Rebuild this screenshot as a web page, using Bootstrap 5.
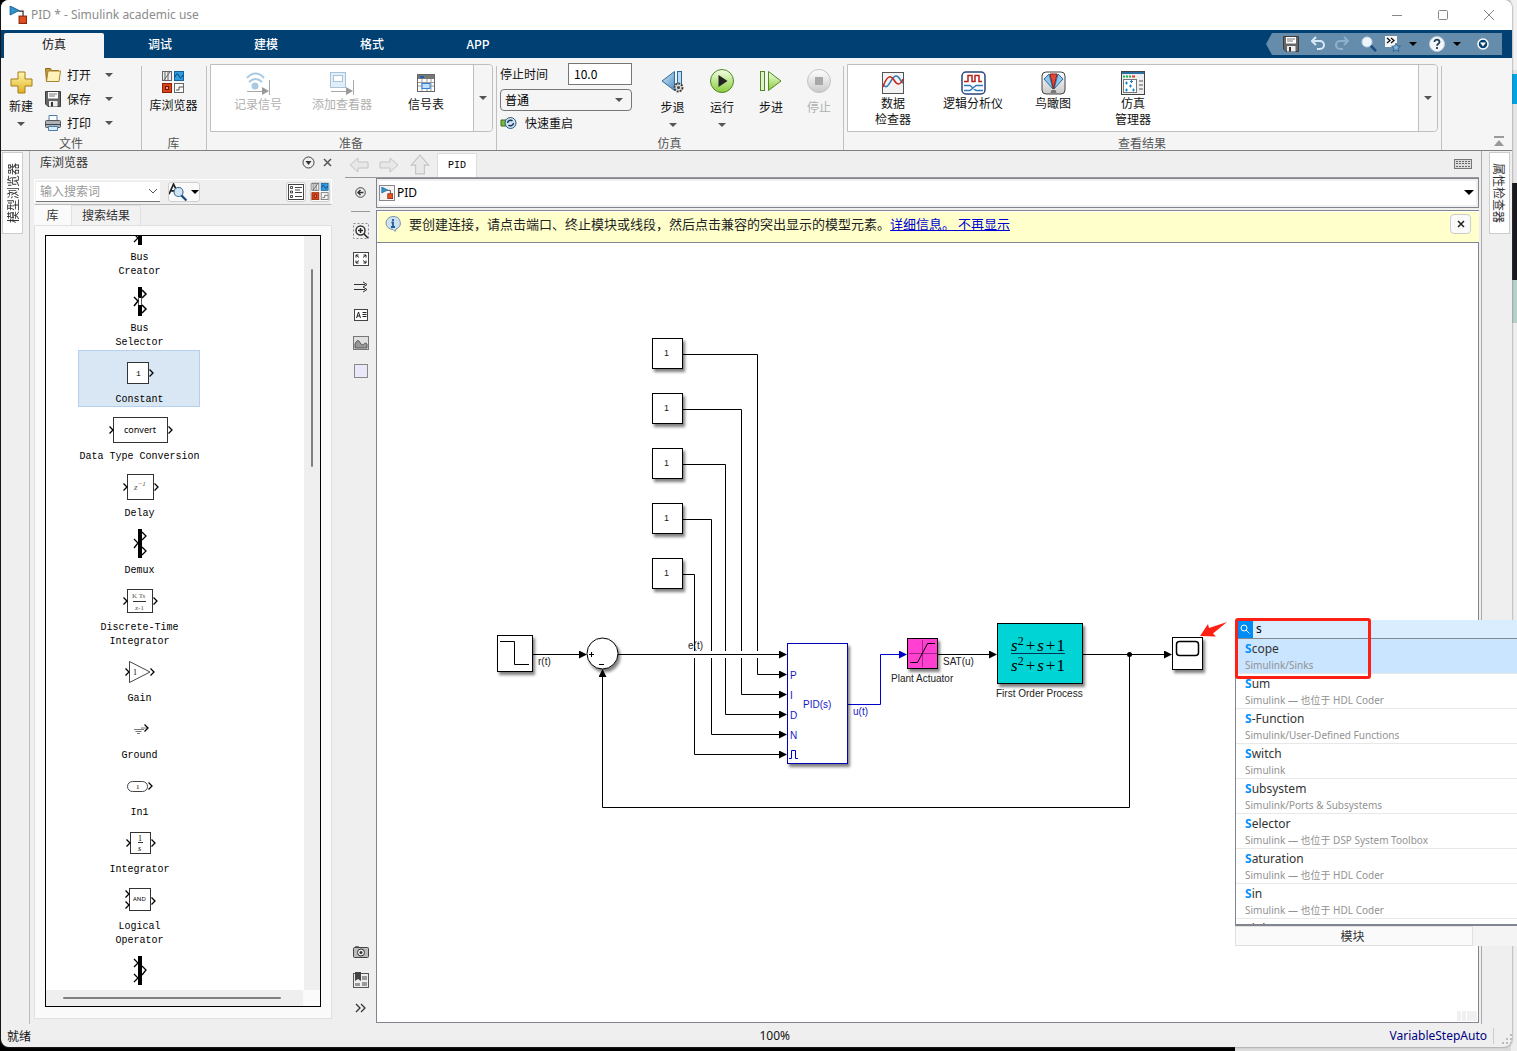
<!DOCTYPE html>
<html lang="zh-CN">
<head>
<meta charset="utf-8">
<meta name="viewport" content="width=device-width, initial-scale=1">
<title>PID * - Simulink academic use</title>
<link href="https://cdn.jsdelivr.net/npm/bootstrap@5.3.0/dist/css/bootstrap.min.css" rel="stylesheet">
<style>
  html, body { height: 100%; }
  body { margin: 0; overflow: hidden; font: 12px/16px "Noto Sans", "Noto Sans CJK SC", sans-serif; color: #111; }
  svg { display: block; flex: none; }
  button { font: inherit; color: inherit; background: none; border: 0; padding: 0; }
  .cjk { font-family: "Noto Sans CJK SC", sans-serif; }
  .desktop { position: relative; height: 100vh; padding: 0 5px 4px 1px;
    background: linear-gradient(#f1f1f1 0 70px, #e2e2e2 70px 74px, #00a4e4 74px 104px, #e6e6e6 104px 183px, #17181f 183px 280px, #b9cfc9 280px 323px, #eee 323px 100%) right / 6px 100% no-repeat,
      linear-gradient(90deg, #000 0 1235px, #dcdcdc 1235px); }
  .app-window { height: 100%; background: #efefef; border-radius: 8px; overflow: hidden; box-shadow: 0 0 2px #555; }
  .title-strip { height: 30px; background: #fff; color: #8c8c8c; padding: 0 13px 0 8px; }
  .win-btns { gap: 26px; }
  .tab-strip { height: 28px; background: #004073; padding: 3px 10px 0 3px; }
  .ribbon-tabs { gap: 6px; }
  .ribbon-tabs .nav-link { width: 100px; height: 25px; padding: 0; line-height: 22px; text-align: center; color: #fff; border-radius: 2px 2px 0 0; font-weight: 500; }
  .ribbon-tabs .nav-link.active { background: #f5f5f5; color: #111; font-weight: 400; }
  .quick-bar { width: 236px; height: 22px; margin-bottom: 3px; background: #668cab; clip-path: polygon(6px 0, 100% 0, 100% 100%, 6px 100%, 0 50%); padding-left: 17px; gap: 8px; }
  .ribbon { height: 93px; background: #f5f5f5; border-bottom: 1px solid #808080; }
  .rib-sec { position: relative; padding-top: 5px; }
  .rib-sec + .rib-sec::before { content: ""; position: absolute; left: 0; top: 8px; bottom: 0; border-left: 1px solid #c0c0c0; }
  .rib-body { height: 72px; }
  .rib-name { text-align: center; color: #555; line-height: 16px; }
  .sec-file { width: 140px; } .sec-lib { width: 65px; } .sec-prep { width: 290px; } .sec-sim { width: 347px; } .sec-res { width: 598px; } .sec-end { width: 71px; }
  .big-btn { display: flex; flex-direction: column; align-items: center; line-height: 16px; }
  .big-btn:disabled { color: #b0b0b0; }
  .prep-btn { width: 84px; padding-top: 7px; }
  .res-btn { width: 80px; padding-top: 6px; }
  .caret { width: 0; height: 0; border: 4px solid transparent; border-top-color: #555; border-bottom: 0; flex: none; }
  .caret.dark { border-top-color: #000; }
  .small-row { height: 24px; gap: 6px; }
  .gallery { height: 68px; margin: 1px 3px 3px 4px; background: #fff; border: 1px solid #bfbfbf; border-radius: 0 4px 4px 0; }
  .gallery-items { padding-left: 5px; }
  .gallery .more { width: 19px; background: #f5f5f5; border-left: 1px solid #bfbfbf; border-radius: 0 4px 4px 0; }
  .time-box { width: 64px; height: 22px; border: 1px solid #777; padding: 0 5px; font: inherit; background: #fff; }
  .mode-box { width: 132px; height: 22px; border: 1px solid #777; border-radius: 4px; padding: 0 4px; font: inherit; appearance: none; background: #f5f5f5; }
  .mode-wrap .caret { position: absolute; right: 9px; top: 9px; }
  .rail { width: 29px; padding: 1px 0 0 1px; }
  .rail.left { border-right: 1px solid #bdbdbd; }
  .rail.right { width: 31px; border-left: 1px solid #aaa; padding-left: 7px; margin-left: 2px; }
  .rail button { width: 21px; height: 82px; background: #fff; border: 1px solid #ccc; writing-mode: vertical-rl; text-orientation: sideways; line-height: 19px; color: #333; }
  .rail.left button { transform: rotate(180deg); }
  .lib-panel { width: 315px; padding: 0 13px 5px 4px; }
  .lib-head { height: 28px; padding: 0 0 5px 6px; color: #333; }
  .lib-tools { height: 26px; border: 1px solid #fff; border-bottom-color: #bbb; padding: 0 1px; }
  .lib-search { width: 124px; height: 20px; background: #fff; border-bottom: 1px solid #777; }
  .lib-search input { border: 0; outline: 0; width: 104px; padding: 0 4px; font: 12px/16px "Noto Sans CJK SC", sans-serif; background: none; }
  .lib-search input::placeholder { color: #999; }
  .tool-btn { height: 20px; border: 1px solid #d0d0d0; border-radius: 3px; background: #fafafa; }
  .lib-tabs { height: 20px; }
  .lib-tabs button { height: 20px; line-height: 18px; border: 1px solid #e0e0e0; border-bottom: 0; color: #333; padding: 0 10px; background: #f2f2f2; }
  .lib-tabs button.active { background: #fafafa; width: 37px; border-color: #fafafa; }
  .lib-pane { background: #fafafa; border: 1px solid #e0e0e0; padding: 9px 10px 11px 10px; min-height: 0; }
  .lib-list { border: 1px solid #000; background: #fff; min-height: 0; height: 100%; }
  .lib-view { overflow: hidden; min-height: 0; padding-left: 32px; }
  .lib-items { margin-top: -28px; width: 122px; }
  .lib-item { text-align: center; font: 10px/14px "Liberation Mono", monospace; color: #000; padding-left: 1px; white-space: nowrap; }
  .lib-item svg { margin: 0 auto; }
  .lib-item.picked { background: #d9e7f5; outline: 1px solid #b3d1ee; outline-offset: -1px; }
  .v-scroll { width: 16px; background: #efefef; padding: 33px 0 0 7px; }
  .v-scroll i { display: block; width: 2px; height: 198px; background: #808080; border-radius: 1px; }
  .h-scroll { height: 16px; background: linear-gradient(#efefef, #efefef) left / calc(100% - 17px) 100% no-repeat #fafafa; padding: 7px 39px 0 17px; }
  .h-scroll i { display: block; height: 2px; background: #808080; border-radius: 1px; }
  .doc-tabs { height: 27px; padding: 0 7px 0 4px; border-bottom: 1px solid #999; gap: 10px; }
  .doc-tab { width: 40px; height: 24px; background: #fff; border: 1px solid #ddd; border-bottom: 0; text-align: center; font: 10px/24px "Liberation Mono", monospace; margin-left: -4px; align-self: flex-end; color: #000; }
  .palette { width: 31px; padding: 7px 0 2px; }
  .palette button { height: 28px; width: 31px; display: flex; align-items: center; justify-content: center; }
  .palette .first { height: 16px; }
  .palette hr { width: 19px; margin: 10px 0 5px; border-color: #999; opacity: 1; }
  .path-bar { height: 30px; background: #fff; border: 1px solid #80858f; box-shadow: inset 0 0 0 2px #f0f0f0; padding: 0 4px 0 2px; gap: 2px; color: #000; font-size: 12px; }
  .note-bar { height: 33px; margin-top: 2px; background: #ffffcc; border: 1px solid #80858f; border-width: 1px 0 1px 1px; padding: 0 8px 4px 8px; color: #222; font: 13px/16px "Noto Sans CJK SC", sans-serif; box-shadow: inset 1px 1px 0 #fff; }
  .note-bar a { color: #0000d6; }
  .note-bar button { width: 21px; height: 20px; border: 1px solid #ccc; border-radius: 4px; background: #fafafa; }
  .model-canvas { position: relative; background: #fff; border: 1px solid #80858f; border-top: 0; overflow: hidden; min-height: 0; }
  .model-canvas svg { position: absolute; left: 0; top: 0; }
  .model-canvas text { font: 10px "Liberation Sans", Arial, sans-serif; fill: #222; }
  .model-canvas .one { font-size: 9px; }
  .model-canvas .blue text { fill: #1717c9; }
  .model-canvas .tf { font: italic 17px "Liberation Serif", serif; fill: #000; }
  .model-canvas .tf .n { font-style: normal; }
  .model-canvas .tf .sup { font-style: normal; font-size: 12px; }
  .status-bar { height: 23px; padding: 0 0 0 6px; }
  .status-bar .job { color: #00007f; border-right: 1px solid #ccc; padding-right: 6px; }
  .status-bar .ready { width: 50%; }
  .finder { position: absolute; left: 1235px; right: 0; top: 620px; z-index: 5; }
  .finder-top { height: 19px; background: #d9edff; border-bottom: 1px solid #808790; padding-left: 1px; }
  .finder-top .glass { width: 17px; height: 18px; background: #008cf5; display: flex; align-items: center; justify-content: center; }
  .finder-top input { border: 0; background: none; outline: 0; padding: 0 3px; font: inherit; width: 100px; }
  .finder-list { height: 287px; overflow: hidden; background: #fff; border-left: 1px solid #80858f; border-bottom: 2px solid #80858f; }
  .finder-list a { display: block; height: 35px; border: 0; border-bottom: 1px solid #e8e8e8; padding: 1px 9px 0; color: #333; text-decoration: none; line-height: 17px; font-size: 12px; background: none; }
  .finder-list a.picked { background: #c9e5ff; }
  .finder-list b { color: #0090ff; }
  .finder-list span { display: block; color: #929292; font-size: 10px; line-height: 16px; }
  .finder-foot { height: 20px; background: #f4f4f4; }
  .finder-foot button { width: 238px; height: 20px; background: #fafafa; border: 1px solid #e0e0e0; padding-right: 3px; color: #333; line-height: 16px; }
  .red-frame { position: absolute; left: 1235px; top: 618px; width: 136px; height: 61px; border: 3px solid #ff2015; border-radius: 3px; z-index: 6; pointer-events: none; }
</style>
</head>
<body>
<svg width="0" height="0" class="position-absolute" aria-hidden="true">
  <defs>
    <linearGradient id="gGold" x1="0" y1="0" x2="0" y2="1"><stop offset="0" stop-color="#fff9b0"/><stop offset="1" stop-color="#e0b020"/></linearGradient>
    <linearGradient id="gGreen" x1="0" y1="0" x2="0" y2="1"><stop offset="0" stop-color="#f4ffe8"/><stop offset="1" stop-color="#8acb3c"/></linearGradient>
    <linearGradient id="gBlue" x1="0" y1="0" x2="1" y2="1"><stop offset="0" stop-color="#d5e9f8"/><stop offset="1" stop-color="#4f8fc4"/></linearGradient>
    <linearGradient id="gGrey" x1="0" y1="0" x2="0" y2="1"><stop offset="0" stop-color="#fff"/><stop offset="1" stop-color="#c8c8c8"/></linearGradient>
    <symbol id="iDisk" viewBox="0 0 16 16"><path d="M.5 .5h15v15H3l-2.500-2.500z" fill="#666" stroke="#3c3c3c"/><path d="M3 1h10v6.500H3z" fill="#fff"/><path d="M4 3h8M4 5h6" stroke="#777"/><path d="M4 10h8.500v5.500H4z" fill="#eee"/><path d="M6 11h2v4.500H6z" fill="#333"/></symbol>
    <symbol id="iLib" viewBox="0 0 22 22"><rect x=".5" y=".5" width="9" height="9" fill="#eee" stroke="#666"/><path d="M3 1v8M6 1v8M2 9l6-8" stroke="#666"/><rect x="12.500" y=".5" width="9" height="9" fill="#2d9be0" stroke="#17619c"/><path d="M13 6c2-5 3-3 4-1s2 3 4-1" fill="none" stroke="#06345c"/><rect x=".5" y="12.500" width="9" height="9" fill="#d8421a" stroke="#8f2305"/><rect x="3.500" y="15.500" width="3" height="3" fill="#ff9470" stroke="#6b1600"/><rect x="12.500" y="12.500" width="9" height="9" fill="#f8f8f8" stroke="#666"/><path d="M14 19h3v-3h4" fill="none" stroke="#555"/></symbol>
    <symbol id="iModel" viewBox="0 0 16 16"><path d="M1 0l8 4-8 4z" fill="#2f93d0" stroke="#155a8c" stroke-width=".8"/><path d="M8.500 4.500h4V9" fill="none" stroke="#222"/><rect x="9" y="9" width="6.500" height="6.500" fill="#e2501f" stroke="#8e2607"/></symbol>
    <symbol id="iIn" viewBox="0 0 5 8"><path d="M.5 .5L4 4 .5 7.500" fill="none" stroke="#000" stroke-width="1.300"/></symbol>
  </defs>
</svg>

<div class="desktop">
<div class="app-window d-flex flex-column">

  <header class="title-strip d-flex align-items-center">
    <svg width="18" height="18" viewBox="0 0 16 16"><use href="#iModel"/></svg>
    <span class="ms-1">PID * - Simulink academic use</span>
    <div class="win-btns ms-auto d-flex align-items-center">
      <button aria-label="最小化" class="px-1"><svg width="12" height="12"><path d="M1 6.500h10" stroke="#888"/></svg></button>
      <button aria-label="最大化" class="px-1"><svg width="12" height="12"><rect x="1.500" y="1.500" width="9" height="9" rx="1" fill="none" stroke="#888"/></svg></button>
      <button aria-label="关闭" class="px-1"><svg width="12" height="12"><path d="M1 1l10 10M11 1L1 11" stroke="#888"/></svg></button>
    </div>
  </header>

  <div class="tab-strip d-flex justify-content-between">
    <nav class="nav ribbon-tabs cjk">
      <a class="nav-link active" href="#">仿真</a><a class="nav-link" href="#">调试</a><a class="nav-link" href="#">建模</a><a class="nav-link" href="#">格式</a><a class="nav-link" href="#">APP</a>
    </nav>
    <div class="quick-bar d-flex align-items-center">
      <button aria-label="保存"><svg width="16" height="16"><use href="#iDisk"/></svg></button>
      <button aria-label="撤销" class="ms-1"><svg width="15" height="15" viewBox="0 0 15 15"><path d="M5 1L1 5l4 4M2 5h7a4 4 0 0 1 0 8H6" fill="none" stroke="#d6e9f8" stroke-width="2"/></svg></button>
      <button aria-label="重做"><svg width="15" height="15" viewBox="0 0 15 15"><path d="M10 1l4 4-4 4M13 5H6a4 4 0 0 0 0 8h3" fill="none" stroke="#8fb0cb" stroke-width="2"/></svg></button>
      <button aria-label="查找" class="ms-1"><svg width="16" height="16" viewBox="0 0 16 16"><path d="M9 9l6 6" stroke="#1f4f80" stroke-width="2.500"/><circle cx="6" cy="6" r="5" fill="#eef6fc" stroke="#c3d7e8"/></svg></button>
      <button aria-label="收藏"><svg width="16" height="16" viewBox="0 0 16 16"><path d="M0 0h12v11H0z" fill="#f5f5f5"/><path d="M2 2l3 2.500L2 7M6 2l3 2.500L6 7" fill="none" stroke="#111" stroke-width="1.300"/><path d="M11 7l1.300 3 3.200.2-2.400 2 .8 3.300-2.900-1.800-2.800 1.800.8-3.300-2.400-2 3.100-.2z" fill="#7fb2df" stroke="#27567f" stroke-width=".8"/></svg></button>
      <i class="caret dark"></i>
      <button aria-label="帮助" class="ms-1"><svg width="16" height="16" viewBox="0 0 16 16"><circle cx="8" cy="8" r="7.500" fill="#f4f7fa" stroke="#bcd"/><path d="M5.500 6c0-3.500 5-3 5 0 0 1.700-2.500 1.700-2.500 3.800M8 11v2" fill="none" stroke="#223b55" stroke-width="1.800"/></svg></button>
      <i class="caret dark"></i>
      <button aria-label="更多" class="ms-2"><svg width="12" height="12" viewBox="0 0 12 12"><circle cx="6" cy="6" r="5" fill="#004073" stroke="#fff" stroke-width="1.500"/><path d="M3 4.500h6L6 8.500z" fill="#fff"/></svg></button>
    </div>
  </div>

  <div class="ribbon d-flex cjk">
    <section class="rib-sec sec-file">
      <div class="rib-body d-flex">
        <button class="big-btn ms-1 px-1 pt-2 justify-content-start"><svg width="23" height="23" viewBox="0 0 23 23"><path d="M8 1h7v7h7v7h-7v7H8v-7H1V8h7z" fill="url(#gGold)" stroke="#a57d18"/></svg><span class="mt-1">新建</span><i class="caret mt-2"></i></button>
        <div class="ms-2">
          <button class="small-row d-flex align-items-center"><svg width="16" height="16" viewBox="0 0 16 16"><path d="M.5 1.500h5l1 2h7v11h-12z" fill="#c99b3b" stroke="#8d6a1e"/><path d="M3 4h12.500l-1.500 10.500H1.500z" fill="#fff2b8" stroke="#a8842f"/></svg>打开<i class="caret ms-2"></i></button>
          <button class="small-row d-flex align-items-center"><svg width="16" height="16"><use href="#iDisk"/></svg>保存<i class="caret ms-2"></i></button>
          <button class="small-row d-flex align-items-center"><svg width="16" height="16" viewBox="0 0 16 16"><path d="M4 .5h8V6H4z" fill="#fff" stroke="#4b7eae"/><rect x=".5" y="5.500" width="15" height="7" rx="1" fill="#a9b2ba" stroke="#555"/><path d="M1 9.500h14" stroke="#444"/><path d="M3.500 11.500h9v4h-9z" fill="#d9ecfa" stroke="#4b7eae"/></svg>打印<i class="caret ms-2"></i></button>
        </div>
      </div>
      <div class="rib-name">文件</div>
    </section>

    <section class="rib-sec sec-lib">
      <div class="rib-body d-flex justify-content-center"><button class="big-btn pt-2 justify-content-start"><svg width="22" height="22"><use href="#iLib"/></svg><span class="mt-1">库浏览器</span></button></div>
      <div class="rib-name">库</div>
    </section>

    <section class="rib-sec sec-prep">
      <div class="gallery d-flex">
        <div class="gallery-items d-flex flex-fill">
          <button class="big-btn prep-btn" disabled><svg width="26" height="24" viewBox="0 0 26 24"><path d="M2 6c5-6 12-6 17 0M4 10c4-4 9-4 13 0" fill="none" stroke="#a9c9e2" stroke-width="2"/><circle cx="10" cy="14" r="3.500" fill="#a9c9e2"/><path d="M2 19.500h17M24.500 8v15" stroke="#aaa"/><path d="M17 15l7 4-7 4z" fill="#999"/></svg>记录信号</button>
          <button class="big-btn prep-btn" disabled><svg width="26" height="24" viewBox="0 0 26 24"><rect x="1.500" y=".5" width="15" height="15" fill="#e2eef7" stroke="#a9c3d8"/><rect x="4.500" y="3.500" width="9" height="6" fill="#fff" stroke="#a9c3d8"/><path d="M2 19.500h17M24.500 8v15" stroke="#aaa"/><path d="M17 15l7 4-7 4z" fill="#999"/></svg>添加查看器</button>
          <button class="big-btn prep-btn"><svg width="18" height="24" viewBox="0 0 18 24"><rect x=".5" y="2.500" width="17" height="17" fill="#fff" stroke="#666"/><path d="M1 3h16v4H1z" fill="#777"/><path d="M3 4h4v2H3z" fill="#1762b5"/><path d="M1 10.500h16M1 14h16M5 7v12M10 7v12M14 7v12" stroke="#999"/><rect x="5" y="11.500" width="8" height="5" fill="#bfe0ff" stroke="#2f80d6"/></svg>信号表</button>
        </div>
        <button class="more d-flex align-items-center justify-content-center" aria-label="展开准备库"><i class="caret"></i></button>
      </div>
      <div class="rib-name">准备</div>
    </section>

    <section class="rib-sec sec-sim">
      <div class="rib-body d-flex">
        <div class="ps-1">
          <div class="d-flex align-items-center justify-content-between mb-1"><label for="stop">停止时间</label><input id="stop" class="time-box" value="10.0"></div>
          <div class="mode-wrap position-relative d-flex"><select class="mode-box cjk" aria-label="仿真模式"><option>普通</option></select><i class="caret"></i></div>
          <button class="d-flex align-items-center gap-2 mt-1"><svg width="17" height="14" viewBox="0 0 17 14"><path d="M1 4h5v6H1z" fill="#79b83d" stroke="#3f6d18"/><circle cx="10.500" cy="7" r="5.500" fill="#cfe2f1" stroke="#31587b"/><path d="M7.500 7a3 3 0 0 1 5-2M13.500 7a3 3 0 0 1-5 2" fill="none" stroke="#173a5c" stroke-width="1.500"/></svg>快速重启</button>
        </div>
        <div class="d-flex ms-4 ps-1 pt-1 gap-4">
          <button class="big-btn justify-content-start"><svg width="25" height="28" viewBox="0 0 25 28"><path d="M14.500 4.500v19L2 14z" fill="url(#gBlue)" stroke="#2f6797"/><rect x="17.500" y="4.500" width="4" height="18" fill="#b9dcf4" stroke="#2f6797"/><circle cx="18.500" cy="20.500" r="4" fill="#ddd" stroke="#444" stroke-width="2" stroke-dasharray="2 1"/><circle cx="18.500" cy="20.500" r="1.500" fill="#444"/></svg><span class="mt-1">步退</span><i class="caret mt-2"></i></button>
          <button class="big-btn justify-content-start"><svg width="26" height="28" viewBox="0 0 26 28"><circle cx="13" cy="14" r="11.500" fill="url(#gGreen)" stroke="#4f8a22"/><path d="M9.500 8l9 6-9 6z" fill="#222"/></svg><span class="mt-1">运行</span><i class="caret mt-2"></i></button>
          <button class="big-btn justify-content-start"><svg width="24" height="28" viewBox="0 0 24 28"><rect x="1.500" y="4.500" width="4" height="19" fill="#dff3cb" stroke="#4f8a22"/><path d="M9.500 4.500v19L22 14z" fill="url(#gGreen)" stroke="#4f8a22"/></svg><span class="mt-1">步进</span></button>
          <button class="big-btn justify-content-start" disabled><svg width="24" height="28" viewBox="0 0 24 28"><circle cx="12" cy="14" r="11.500" fill="url(#gGrey)" stroke="#c4c4c4"/><path d="M8 10h8v8H8z" fill="#a8a8a8"/></svg><span class="mt-1">停止</span></button>
        </div>
      </div>
      <div class="rib-name">仿真</div>
    </section>

    <section class="rib-sec sec-res">
      <div class="gallery d-flex">
        <div class="gallery-items d-flex flex-fill">
          <button class="big-btn res-btn"><svg width="24" height="24" viewBox="0 0 24 24"><rect x="1.500" y="1.500" width="21" height="21" fill="#f3f3f3" stroke="#555"/><path d="M2 13c5 9 8-8 13-8 4 0 4 6 7 7" fill="none" stroke="#2e78bd" stroke-width="1.500"/><path d="M2 16c4-12 8-12 11-7s6 6 9-1" fill="none" stroke="#c3271a" stroke-width="1.500"/></svg><span>数据<br>检查器</span></button>
          <button class="big-btn res-btn"><svg width="25" height="24" viewBox="0 0 25 24"><rect x="1" y="1" width="23" height="22" rx="4" fill="#fff" stroke="#27457a" stroke-width="1.500"/><path d="M3 10.500h4v-6h4v6h3v-6h4v6h3" fill="none" stroke="#b3221a" stroke-width="1.500"/><path d="M3 14.500h6l6 5h7M3 19.500h6l6-5h7" fill="none" stroke="#2e78bd" stroke-width="1.300"/></svg>逻辑分析仪</button>
          <button class="big-btn res-btn"><svg width="25" height="24" viewBox="0 0 25 24"><rect x="1" y="1" width="23" height="22" rx="4" fill="url(#gGrey)" stroke="#444"/><path d="M3 8l5-5 4 15z" fill="#8cc6ee" stroke="#2b6ea0"/><path d="M22 8l-5-5-4 15z" fill="#8cc6ee" stroke="#2b6ea0"/><path d="M9 3h7l-3.500 15z" fill="#e0483a" stroke="#8b1d12"/><path d="M9.500 22l1-3h4l1 3z" fill="#777"/></svg>鸟瞰图</button>
          <button class="big-btn res-btn"><svg width="24" height="24" viewBox="0 0 24 24"><rect x=".5" y=".5" width="23" height="23" fill="#eee" stroke="#444"/><path d="M1 1h22v2H1z" fill="#2b6ea0"/><path d="M2 5.500h8" stroke="#1fb44a" stroke-width="2" stroke-dasharray="2 1"/><path d="M11 5.500h3" stroke="#e33" stroke-width="2"/><rect x="2.500" y="8.500" width="13" height="13" fill="#fff" stroke="#777"/><path d="M4 12h3M5.500 10.500v3M9 10.500h3M10.500 9v3M8 15h3M9.500 13.500v3M4 19h3M5.500 17.500v3M11 19h3M12.500 17.500v3" stroke="#1683cf"/><path d="M18 10h4M18 14h4M18 18h4" stroke="#555"/></svg><span>仿真<br>管理器</span></button>
        </div>
        <button class="more d-flex align-items-center justify-content-center" aria-label="展开结果库"><i class="caret"></i></button>
      </div>
      <div class="rib-name">查看结果</div>
    </section>
    <section class="rib-sec sec-end d-flex align-items-end justify-content-end pe-2 pb-1 flex-fill">
      <button aria-label="折叠工具条"><svg width="10" height="10"><path d="M0 1h10" stroke="#999" stroke-width="2"/><path d="M5 4l5 6H0z" fill="#999"/></svg></button>
    </section>
  </div>

  <main class="d-flex flex-fill" style="min-height:0">
    <aside class="rail left"><button class="cjk">模型浏览器</button></aside>

    <section class="lib-panel d-flex flex-column">
      <div class="lib-head d-flex align-items-center cjk">库浏览器
        <button class="ms-auto me-2" aria-label="面板操作"><svg width="13" height="13"><circle cx="6.500" cy="6.500" r="5.500" fill="none" stroke="#444"/><path d="M3.500 5h6l-3 4z" fill="#333"/></svg></button>
        <button aria-label="关闭面板"><svg width="9" height="9"><path d="M1 1l7 7M8 1L1 8" stroke="#555" stroke-width="1.500"/></svg></button>
      </div>
      <div class="lib-tools d-flex align-items-center">
        <div class="lib-search d-flex align-items-center"><input placeholder="输入搜索词" aria-label="输入搜索词"><svg width="10" height="6" class="ms-2"><path d="M1 1l4 4 4-4" fill="none" stroke="#555"/></svg></div>
        <button class="tool-btn d-flex align-items-center gap-1 ms-2" aria-label="搜索选项"><svg width="18" height="18" viewBox="0 0 16 16"><path d="M0 10L4 1l2 4M2 7h3" fill="none" stroke="#222" stroke-width="1.500"/><circle cx="8.500" cy="8" r="4" fill="#cde5f7" stroke="#3a6a94"/><path d="M11 11l4.500 4.500" stroke="#1d4f80" stroke-width="2"/></svg><i class="caret dark"></i></button>
        <button class="tool-btn d-flex align-items-center ms-auto" aria-label="列表视图"><svg width="18" height="16" viewBox="0 0 18 16"><rect x="1.500" y=".5" width="15" height="15" fill="#fff" stroke="#444"/><path d="M3.500 2.500h2v2h-2zM3.500 7h2v2h-2zM3.500 11.500h2v2h-2z" fill="none" stroke="#444"/><path d="M8 3.500h7M8 6h5M8 8.500h7M8 12.500h7" stroke="#444"/></svg></button>
        <button class="tool-btn d-flex align-items-center ms-1" aria-label="库视图"><svg width="18" height="17"><use href="#iLib"/></svg></button>
      </div>
      <div class="lib-tabs d-flex cjk"><button class="active">库</button><button>搜索结果</button></div>
      <div class="lib-pane flex-fill">
        <div class="lib-list d-flex flex-column">
          <div class="d-flex flex-fill" style="min-height:0">
            <div class="lib-view flex-fill">
              <div class="lib-items">
                <div class="lib-item"><svg width="60" height="43"><path d="M28 8h4v29h-4z"/><path d="M24 11l4 4-4 4M24 26l4 4-4 4" fill="none" stroke="#000" stroke-width="1.300"/></svg>Bus<br>Creator</div>
                <div class="lib-item"><svg width="60" height="43"><path d="M28 8h4v11h-4zM28 26h4v11h-4z"/><path d="M28.500 18v8M31.500 18v8" stroke="#555"/><path d="M24 18l4 4-4 5M32 11l4 4-4 4M32 26l4 4-4 4" fill="none" stroke="#000" stroke-width="1.500"/></svg>Bus<br>Selector</div>
                <div class="lib-item picked"><svg width="60" height="43"><rect x="17.500" y="12.500" width="21" height="21" fill="#fff" stroke="#333"/><text x="26" y="26" font-size="8">1</text><use href="#iIn" x="39" y="19" width="5" height="8"/></svg>Constant</div>
                <div class="lib-item"><svg width="70" height="43"><rect x="8.500" y="10.500" width="54" height="25" fill="#fff" stroke="#333"/><text x="19" y="26" font-size="9" font-family="Noto Sans">convert</text><use href="#iIn" x="4" y="19" width="5" height="8"/><use href="#iIn" x="63" y="19" width="5" height="8"/></svg>Data Type Conversion</div>
                <div class="lib-item"><svg width="60" height="43"><rect x="17.500" y="10.500" width="26" height="25" fill="#fff" stroke="#333"/><text x="24" y="26" font-size="9" font-family="Liberation Serif" font-style="italic" fill="#555">z<tspan font-size="7" dy="-4">−1</tspan></text><use href="#iIn" x="13" y="19" width="5" height="8"/><use href="#iIn" x="44" y="19" width="5" height="8"/></svg>Delay</div>
                <div class="lib-item"><svg width="60" height="43"><path d="M28 8h4v29h-4z"/><path d="M24 18l4 4-4 5M32 11l4 4-4 4M32 26l4 4-4 4" fill="none" stroke="#000" stroke-width="1.300"/></svg>Demux</div>
                <div class="lib-item"><svg width="60" height="43"><rect x="17.500" y="11.500" width="25" height="23" fill="#fff" stroke="#333"/><g font-size="7" font-family="Liberation Serif" fill="#555"><text x="22" y="20">K Ts</text><text x="25" y="32">z-1</text></g><path d="M23 23.500h13" stroke="#333"/><use href="#iIn" x="13" y="19" width="5" height="8"/><use href="#iIn" x="43" y="19" width="5" height="8"/></svg>Discrete-Time<br>Integrator</div>
                <div class="lib-item"><svg width="60" height="43"><path d="M19.500 12.500v21L40 23z" fill="#fff" stroke="#444"/><text x="23" y="26" font-size="8" font-family="Liberation Serif">1</text><use href="#iIn" x="15" y="19" width="5" height="8"/><use href="#iIn" x="40" y="19" width="5" height="8"/></svg>Gain</div>
                <div class="lib-item"><svg width="60" height="43"><path d="M24 23.500h10M25.500 25.500h6M27 27.500h3M31 22h6" stroke="#777"/><use href="#iIn" x="34" y="18" width="5" height="8"/></svg>Ground</div>
                <div class="lib-item"><svg width="60" height="43"><rect x="17.500" y="18.500" width="20" height="10" rx="5" fill="#fff" stroke="#444"/><text x="26" y="26" font-size="7" font-family="Liberation Serif">1</text><use href="#iIn" x="38" y="19" width="5" height="8"/></svg>In1</div>
                <div class="lib-item"><svg width="60" height="43"><rect x="20.500" y="12.500" width="20" height="21" fill="#fff" stroke="#333"/><g font-size="8" font-family="Liberation Serif"><text x="28" y="21">1</text><text x="28" y="31" font-style="italic">s</text></g><path d="M28 22.500h5" stroke="#333"/><use href="#iIn" x="16" y="19" width="5" height="8"/><use href="#iIn" x="41" y="19" width="5" height="8"/></svg>Integrator</div>
                <div class="lib-item"><svg width="60" height="43"><rect x="19.500" y="11.500" width="21" height="22" fill="#fff" stroke="#333"/><text x="23" y="24" font-size="6" font-family="Noto Sans">AND</text><use href="#iIn" x="15" y="13" width="5" height="8"/><use href="#iIn" x="15" y="24" width="5" height="8"/><use href="#iIn" x="41" y="20" width="5" height="8"/></svg>Logical<br>Operator</div>
                <div class="lib-item"><svg width="60" height="43"><path d="M28 8h4v29h-4z"/><path d="M24 11l4 4-4 4M24 26l4 4-4 4M32 18l4 4-4 5" fill="none" stroke="#000" stroke-width="1.300"/></svg></div>
              </div>
            </div>
            <div class="v-scroll"><i></i></div>
          </div>
          <div class="h-scroll"><i></i></div>
        </div>
      </div>
    </section>

    <section class="flex-fill d-flex flex-column" style="min-width:0">
      <div class="doc-tabs d-flex align-items-center">
        <button aria-label="后退"><svg width="20" height="20" viewBox="0 0 20 18"><path d="M1 10l8-7v4h10v6H9v4z" fill="#e8e8e8" stroke="#c4c4c4"/></svg></button>
        <button aria-label="前进"><svg width="20" height="20" viewBox="0 0 20 18"><path d="M19 10l-8-7v4H1v6h10v4z" fill="#e8e8e8" stroke="#c4c4c4"/></svg></button>
        <button aria-label="向上"><svg width="22" height="22" viewBox="0 0 20 20"><path d="M10 2l8 9h-4v8H6v-8H2z" fill="#e8e8e8" stroke="#c4c4c4"/></svg></button>
        <button class="doc-tab">PID</button>
        <button class="ms-auto" aria-label="键盘"><svg width="18" height="10"><rect x=".5" y=".5" width="17" height="9" fill="#ddd" stroke="#777"/><path d="M2 2.500h14M2 4.500h14M2 7.500h2M5 7.500h8M14 7.500h2" stroke="#666" stroke-dasharray="2 1"/></svg></button>
      </div>
      <div class="d-flex flex-fill" style="min-height:0">
        <div class="palette d-flex flex-column align-items-center">
          <button class="first" aria-label="隐藏浏览器"><svg width="11" height="11"><circle cx="5.500" cy="5.500" r="4.800" fill="none" stroke="#444"/><path d="M8.500 5.500h-5M5.500 3L3 5.500 5.500 8" fill="none" stroke="#333" stroke-width="1.500"/></svg></button>
          <hr>
          <button aria-label="缩放"><svg width="16" height="16"><rect x=".5" y=".5" width="15" height="15" fill="none" stroke="#888" stroke-dasharray="2 2"/><circle cx="7.500" cy="7.500" r="4.500" fill="#fff" stroke="#333" stroke-width="1.500"/><path d="M5 7.500h5M7.500 5v5M11 11l4 4" stroke="#222" stroke-width="1.500"/></svg></button>
          <button aria-label="适应视图"><svg width="16" height="14"><rect x=".5" y=".5" width="15" height="13" fill="#fff" stroke="#444"/><path d="M3 5.500V3h2.500M10.500 3H13v2.500M13 8.500V11h-2.500M5.500 11H3V8.500M3 3l3 2.500M13 3l-3 2.500M3 11l3-2.500M13 11l-3-2.500" fill="none" stroke="#222"/></svg></button>
          <button aria-label="信号线"><svg width="16" height="12"><path d="M1 3.500h11M1 8.500h11M10 1l4 2.500L10 6M10 6l4 2.500L10 11" fill="none" stroke="#333"/></svg></button>
          <button aria-label="注释"><svg width="14" height="12"><rect x=".5" y=".5" width="13" height="11" fill="#fff" stroke="#444"/><path d="M2.500 9L4.500 3l2 6M3 7h3M8.500 3.500h4M8.500 5.500h4M8.500 7.500h4" fill="none" stroke="#222"/></svg></button>
          <button aria-label="图像"><svg width="16" height="14"><rect x=".5" y=".5" width="15" height="13" fill="#e0e0e0" stroke="#777"/><path d="M2 8c3-6 4-3 6 0s4-3 6 0v4H2z" fill="#999" stroke="#555"/></svg></button>
          <button aria-label="区域"><svg width="14" height="14"><rect x=".5" y=".5" width="13" height="13" fill="#e9e7f8" stroke="#888"/></svg></button>
          <button class="mt-auto" aria-label="截图"><svg width="16" height="12"><path d="M2 0h4v2H2z" fill="#777"/><rect x=".5" y="1.500" width="15" height="10" rx="1" fill="#bbb" stroke="#444"/><circle cx="8" cy="6.500" r="3.500" fill="#eee" stroke="#333"/><circle cx="8" cy="6.500" r="1.500" fill="#333"/></svg></button>
          <button aria-label="书签"><svg width="16" height="16"><rect x=".5" y="1.500" width="15" height="14" fill="#eee" stroke="#555"/><path d="M2 0h6v9L5 7 2 9z" fill="#444"/><path d="M9 4h5v4H9zM9 10h5v4H9zM2 11h5v3H2z" fill="#999"/></svg></button>
          <button aria-label="更多工具"><svg width="12" height="10"><path d="M1 1l4 4-4 4M6 1l4 4-4 4" fill="none" stroke="#333" stroke-width="1.300"/></svg></button>
        </div>
        <div class="flex-fill d-flex flex-column" style="min-width:0">
          <div class="path-bar d-flex align-items-center"><svg width="16" height="16"><rect x=".5" y=".5" width="15" height="15" fill="#f4f4f4" stroke="#888"/><use href="#iModel" x="2" y="2" width="12" height="12"/></svg><span>PID</span><svg width="10" height="5" class="ms-auto"><path d="M0 0h10L5 5z"/></svg></div>
          <div class="note-bar d-flex align-items-center">
            <svg width="16" height="16" viewBox="0 0 16 16"><path d="M8 .5a7 6.500 0 1 0 0 13l2 2 1-2.500A7 6.500 0 0 0 8 .5z" fill="#cfe0ee" stroke="#7a95ab"/><path d="M8 3v2M6.500 6.500H8V11M6 11h4" stroke="#1d5f9e" stroke-width="1.800" fill="none"/></svg>
            <span class="ps-2">要创建连接，请点击端口、终止模块或线段，然后点击兼容的突出显示的模型元素。</span>
            <a href="#">详细信息。&nbsp;不再显示</a>
            <button class="ms-auto d-flex align-items-center justify-content-center" aria-label="关闭提示"><svg width="8" height="8"><path d="M1 1l6 6M7 1L1 7" stroke="#222" stroke-width="1.500"/></svg></button>
          </div>
          <div class="model-canvas flex-fill">
            <svg width="1140" height="779" viewBox="377 243 1140 779">
              <defs>
                <filter id="sh" x="-20%" y="-20%" width="150%" height="150%"><feDropShadow dx="2" dy="3" stdDeviation="1.500" flood-color="#000" flood-opacity=".5"/></filter>
                <marker id="ar" markerWidth="8" markerHeight="9" refX="7" refY="4" orient="auto" markerUnits="userSpaceOnUse"><path d="M0 0l8 4-8 4z"/></marker>
                <marker id="arb" markerWidth="8" markerHeight="9" refX="7" refY="4" orient="auto" markerUnits="userSpaceOnUse"><path d="M0 0l8 4-8 4z" fill="#00c"/></marker>
              </defs>
              <g fill="none" stroke="#000">
                <path d="M683 354.500h74.500v320H786" marker-end="url(#ar)"/>
                <path d="M683 409.500h58.500v285H786" marker-end="url(#ar)"/>
                <path d="M683 464.500h42.500v250H786" marker-end="url(#ar)"/>
                <path d="M683 519.500h28.500v215H786" marker-end="url(#ar)"/>
                <path d="M683 574.500h11.500v180H786" marker-end="url(#ar)"/>
                <path d="M690 654.500h72" stroke="#fff" stroke-width="7"/>
                <path d="M618 654.500h168" marker-end="url(#ar)"/>
                <path d="M533 654.500h53" marker-end="url(#ar)"/>
                <path d="M938 654.500h58" marker-end="url(#ar)"/>
                <path d="M1083 654.500h88" marker-end="url(#ar)"/>
                <path d="M1129.500 654v153.500H602.500V670" marker-end="url(#ar)"/>
                <path d="M848 704.500h32.500v-50H906" stroke="#00c" marker-end="url(#arb)"/>
              </g>
              <circle cx="1129.500" cy="654.500" r="2.500"/>
              <g filter="url(#sh)" fill="#fff" stroke="#000">
                <rect x="652.500" y="338.500" width="30" height="30"/><rect x="652.500" y="393.500" width="30" height="30"/><rect x="652.500" y="448.500" width="30" height="30"/><rect x="652.500" y="503.500" width="30" height="30"/><rect x="652.500" y="558.500" width="30" height="30"/>
                <rect x="497.500" y="635.500" width="35" height="36"/>
                <circle cx="602.500" cy="653.500" r="15.500"/>
                <rect x="787.500" y="643.500" width="60" height="120" stroke="#0000b4"/>
                <rect x="907.500" y="638.500" width="30" height="30" fill="#ff40d0"/>
                <rect x="997.500" y="623.500" width="85" height="60" fill="#00d4d4"/>
                <rect x="1172.500" y="637.500" width="30" height="32"/>
              </g>
              <g fill="none" stroke="#000">
                <path d="M500 641.500h14.500v23H529"/>
                <path d="M909 653.500h28M922.500 640v27" stroke="#a12684"/>
                <path d="M910 662.500h7.500l10-19h7.500"/>
                <path d="M1011 653.500h54" stroke="#035" />
                <rect x="1176.500" y="641.500" width="22" height="14" rx="3" stroke-width="1.500"/>
                <path d="M789 758.500h2.500v-8h4v8h2.500" stroke="#00c"/>
                <path d="M589 654.500h5M591.500 652v5M599 664.500h5"/>
              </g>
              <g><text class="one" x="664" y="356">1</text><text class="one" x="664" y="411">1</text><text class="one" x="664" y="466">1</text><text class="one" x="664" y="521">1</text><text class="one" x="664" y="576">1</text></g>
              <text x="538" y="665">r(t)</text><text x="688" y="649">e(t)</text>
              <g class="blue"><text x="803" y="708">PID(s)</text><text x="790" y="679">P</text><text x="790" y="699">I</text><text x="790" y="719">D</text><text x="790" y="739">N</text><text x="853" y="715">u(t)</text></g>
              <text x="943" y="665">SAT(u)</text><text x="891" y="682">Plant Actuator</text><text x="996" y="697">First Order Process</text>
              <text class="tf" x="1011" y="651">s<tspan class="sup" dy="-6">2</tspan><tspan class="n" dy="6" dx="2">+</tspan><tspan dx="2">s</tspan><tspan class="n" dx="2">+</tspan><tspan class="n" dx="1">1</tspan></text>
              <text class="tf" x="1011" y="671">s<tspan class="sup" dy="-6">2</tspan><tspan class="n" dy="6" dx="2">+</tspan><tspan dx="2">s</tspan><tspan class="n" dx="2">+</tspan><tspan class="n" dx="1">1</tspan></text>
              <path d="M1227 622l-18 6-1-4-8 12 16 .5-3-3z" fill="#ff2015"/>
              <path d="M1457 1011h4v10h-4zM1462 1011h4v10h-4zM1467 1011h10v10h-10z" fill="#f0f0f0"/>
            </svg>
          </div>
          <div style="height:1px"></div>
        </div>
      </div>
    </section>
    <aside class="rail right"><button class="cjk">属性检查器</button></aside>
  </main>

  <footer class="status-bar d-flex align-items-center">
    <span class="ready cjk">就绪</span><span>100%</span>
    <span class="job ms-auto">VariableStepAuto</span>
    <svg width="18" height="20"><path d="M8 16h2v2H8zM12 16h2v2h-2zM16 16h2v2h-2zM12 12h2v2h-2zM16 12h2v2h-2zM16 8h2v2h-2z" fill="#bbb"/></svg>
  </footer>
</div>

<div class="finder">
  <div class="finder-top d-flex align-items-center"><span class="glass"><svg width="10" height="10"><circle cx="4" cy="4" r="3" fill="none" stroke="#fff"/><path d="M6 6l3.500 3.500" stroke="#fff"/></svg></span><input value="s" aria-label="搜索模块"></div>
  <div class="finder-list">
    <a href="#" class="picked"><b>S</b>cope<span>Simulink/Sinks</span></a>
    <a href="#"><b>S</b>um<span>Simulink — 也位于 HDL Coder</span></a>
    <a href="#"><b>S</b>-Function<span>Simulink/User-Defined Functions</span></a>
    <a href="#"><b>S</b>witch<span>Simulink</span></a>
    <a href="#"><b>S</b>ubsystem<span>Simulink/Ports &amp; Subsystems</span></a>
    <a href="#"><b>S</b>elector<span>Simulink — 也位于 DSP System Toolbox</span></a>
    <a href="#"><b>S</b>aturation<span>Simulink — 也位于 HDL Coder</span></a>
    <a href="#"><b>S</b>in<span>Simulink — 也位于 HDL Coder</span></a>
    <a href="#"><b>S</b>ink</a>
  </div>
  <div class="finder-foot cjk"><button>模块</button></div>
</div>
<div class="red-frame"></div>
</div>
<script src="https://cdn.jsdelivr.net/npm/bootstrap@5.3.0/dist/js/bootstrap.bundle.min.js"></script>
</body>
</html>
